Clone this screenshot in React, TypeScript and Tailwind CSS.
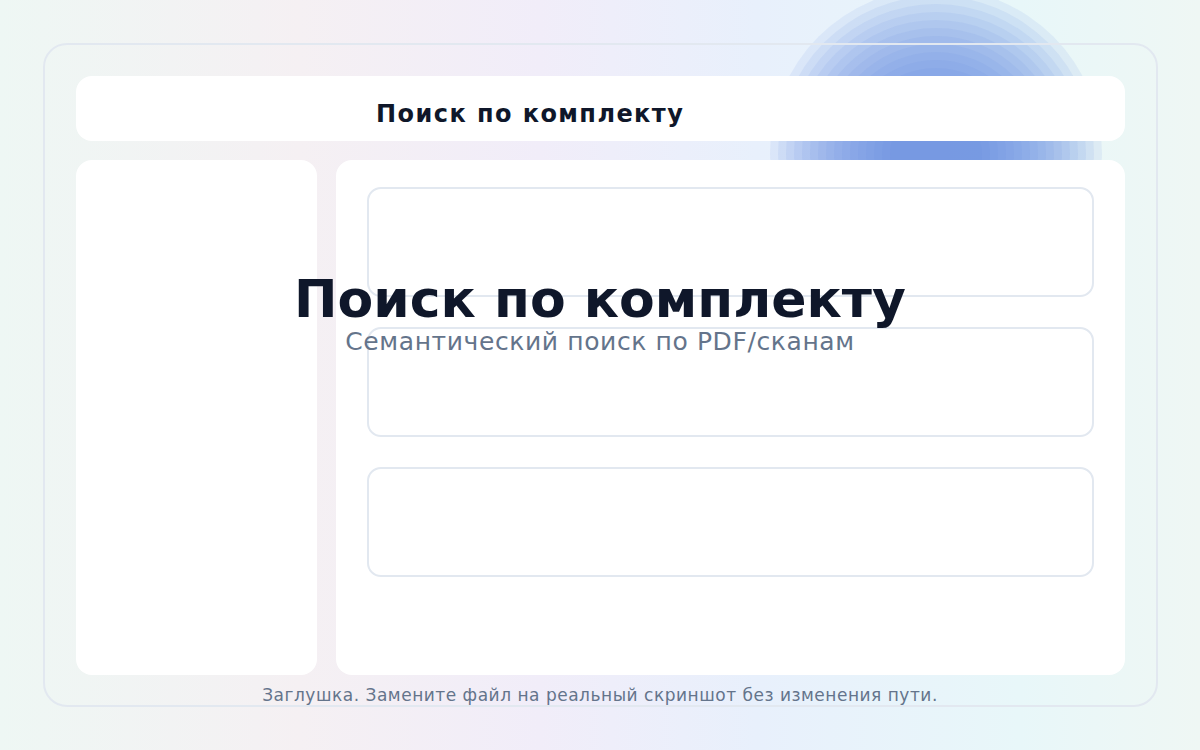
export default function App() {
  const cards = [0, 1, 2];
  const rings = Array.from({ length: 16 }, (_, i) => 166 - i * 8);

  return (
    <div
      className="relative h-[750px] w-[1200px] overflow-hidden bg-[linear-gradient(90deg,#eef7f4_0%,#f5f0f3_25%,#f1edf9_45%,#e8f0fc_63%,#e8f7f9_85%,#eff7f4_100%)]"
      style={{ fontFamily: '"DejaVu Sans", "Noto Sans", sans-serif' }}
    >
      {/* blue glow behind the panels, drawn as stacked rings */}
      <svg className="absolute left-[770px] top-[-12px]" width="332" height="332" viewBox="0 0 332 332">
        {rings.map((r) => (
          <circle key={r} cx="166" cy="166" r={r} fill="#648ae1" fillOpacity="0.1" />
        ))}
      </svg>

      <div className="relative p-[43px] pr-[42px]">
        <div className="flex h-[664px] flex-col gap-[19px] rounded-[24px] border-2 border-[#e2e8f0] px-[31px] pb-[30px] pt-[31px]">
          <header className="flex h-[65px] shrink-0 items-center rounded-[16px] bg-white pl-[300px] pt-[10px]">
            <h2 className="text-[24px] font-bold leading-none tracking-[0.06em] text-[#0f172a]">Поиск по комплекту</h2>
          </header>

          <div className="flex flex-1 gap-[19px]">
            <aside className="w-[241px] rounded-[16px] bg-white" />
            <main className="flex flex-1 flex-col gap-[30px] rounded-[16px] bg-white px-[31px] pt-[27px]">
              {cards.map((c) => (
                <div key={c} className="h-[110px] rounded-[14px] border-2 border-[#e2e8f0]" />
              ))}
            </main>
          </div>
        </div>
      </div>

      {/* placeholder overlay */}
      <div className="absolute left-0 right-0 top-[267px] flex flex-col items-center">
        <h1 className="text-[52px] font-bold leading-[64px] text-[#0f172a]">Поиск по комплекту</h1>
        <p className="mt-[-4px] text-[25px] leading-[30px] tracking-[0.6px] text-[#64748b]">Семантический поиск по PDF/сканам</p>
      </div>

      <p className="absolute left-0 right-0 top-[683px] text-center text-[17px] leading-[24px] tracking-[0.03em] text-[#64748b]">
        Заглушка. Замените файл на реальный скриншот без изменения пути.
      </p>
    </div>
  );
}
